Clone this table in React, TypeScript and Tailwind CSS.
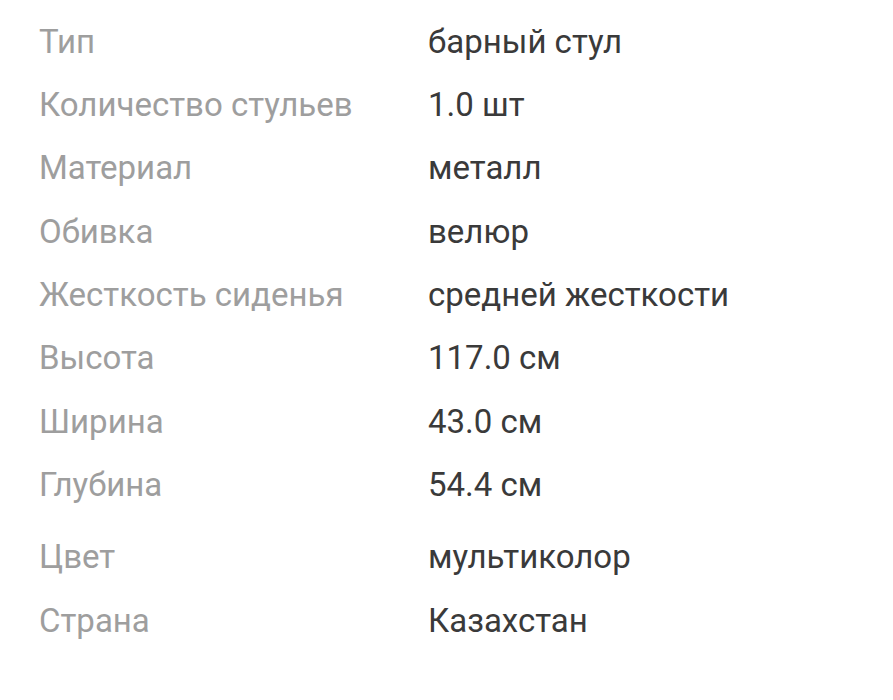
const SPECS: { label: string; value: string; gap?: boolean }[] = [
  { label: "Тип", value: "барный стул" },
  { label: "Количество стульев", value: "1.0 шт" },
  { label: "Материал", value: "металл" },
  { label: "Обивка", value: "велюр" },
  { label: "Жесткость сиденья", value: "средней жесткости" },
  { label: "Высота", value: "117.0 см" },
  { label: "Ширина", value: "43.0 см" },
  { label: "Глубина", value: "54.4 см" },
  { label: "Цвет", value: "мультиколор", gap: true },
  { label: "Страна", value: "Казахстан" },
];

export default function App() {
  return (
    <div
      className="w-[893px] h-[700px] bg-white pt-[10px] pl-[39px] overflow-hidden"
      style={{ fontFamily: "Roboto, 'Noto Sans', sans-serif" }}
    >
      {SPECS.map(({ label, value, gap }) => (
        <div
          key={label}
          className={`flex items-center h-[63.3px] text-[33px] ${gap ? "mt-[9px]" : ""}`}
        >
          <div className="w-[389px] shrink-0 text-[#9e9e9e]">{label}</div>
          <div className="text-[#3a3a3a]">{value}</div>
        </div>
      ))}
    </div>
  );
}
